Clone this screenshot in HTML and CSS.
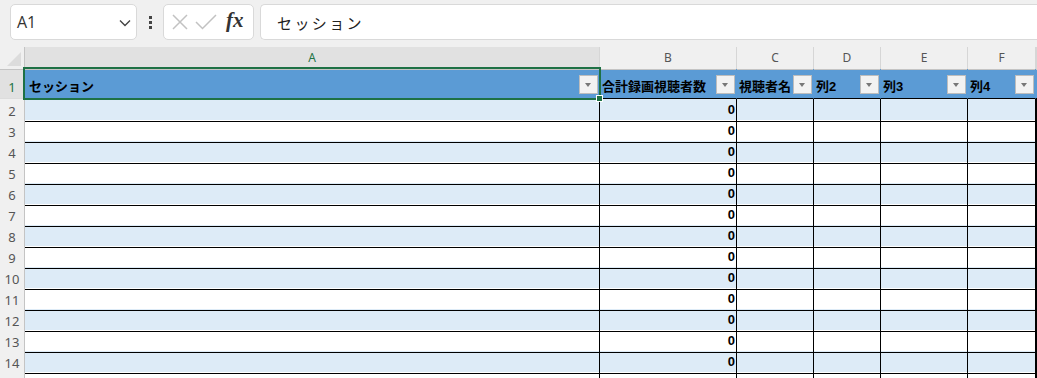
FILE: index.html
```html
<!DOCTYPE html>
<html lang="ja">
<head>
    <meta charset="UTF-8">
    <title>Sheet</title>
    <link rel="stylesheet" href="styles.css">
</head>
<body>

    <!-- Formula bar -->
    <div class="toolbar">
        <div class="namebox">
            <span>A1</span>
            <svg width="12" height="8" viewBox="0 0 12 8"><path d="M1 1.5 L6 6.5 L11 1.5" fill="none" stroke="#444" stroke-width="1.4"/></svg>
        </div>
        <div class="dots"><i></i><i></i><i></i></div>
        <div class="fxbox">
            <svg width="18" height="18" viewBox="0 0 18 18"><path d="M2 2 L16 16 M16 2 L2 16" stroke="#c2c2c2" stroke-width="1.5"/></svg>
            <svg width="22" height="18" viewBox="0 0 22 18"><path d="M1 9 L7.5 15.5 L21 2" fill="none" stroke="#c2c2c2" stroke-width="1.5"/></svg>
            <span class="fx">fx</span>
        </div>
        <div class="formula">セッション</div>
    </div>

    <!-- Grid -->
    <div class="sheet">
        <div class="row colhead">
            <div class="corner"></div>
            <div class="sel">A</div><div>B</div><div>C</div><div>D</div><div>E</div><div>F</div><div></div>
        </div>

        <div class="row thead">
            <div class="rh sel">1</div>
            <div class="hc a1">セッション<b class="dd"></b></div>
            <div class="hc">合計録画視聴者数<b class="dd"></b></div>
            <div class="hc">視聴者名<b class="dd"></b></div>
            <div class="hc">列2<b class="dd"></b></div>
            <div class="hc">列3<b class="dd"></b></div>
            <div class="hc">列4<b class="dd"></b></div>
            <div class="hc"></div>
        </div>

        <div class="row band"><div class="rh">2</div><div></div><div class="num">0</div><div></div><div></div><div></div><div></div><div></div></div>
        <div class="row"><div class="rh">3</div><div></div><div class="num">0</div><div></div><div></div><div></div><div></div><div></div></div>
        <div class="row band"><div class="rh">4</div><div></div><div class="num">0</div><div></div><div></div><div></div><div></div><div></div></div>
        <div class="row"><div class="rh">5</div><div></div><div class="num">0</div><div></div><div></div><div></div><div></div><div></div></div>
        <div class="row band"><div class="rh">6</div><div></div><div class="num">0</div><div></div><div></div><div></div><div></div><div></div></div>
        <div class="row"><div class="rh">7</div><div></div><div class="num">0</div><div></div><div></div><div></div><div></div><div></div></div>
        <div class="row band"><div class="rh">8</div><div></div><div class="num">0</div><div></div><div></div><div></div><div></div><div></div></div>
        <div class="row"><div class="rh">9</div><div></div><div class="num">0</div><div></div><div></div><div></div><div></div><div></div></div>
        <div class="row band"><div class="rh">10</div><div></div><div class="num">0</div><div></div><div></div><div></div><div></div><div></div></div>
        <div class="row"><div class="rh">11</div><div></div><div class="num">0</div><div></div><div></div><div></div><div></div><div></div></div>
        <div class="row band"><div class="rh">12</div><div></div><div class="num">0</div><div></div><div></div><div></div><div></div><div></div></div>
        <div class="row"><div class="rh">13</div><div></div><div class="num">0</div><div></div><div></div><div></div><div></div><div></div></div>
        <div class="row band"><div class="rh">14</div><div></div><div class="num">0</div><div></div><div></div><div></div><div></div><div></div></div>
        <div class="row"><div class="rh">15</div><div></div><div class="num">0</div><div></div><div></div><div></div><div></div><div></div></div>
    </div>

</body>
</html>
```

FILE: styles.css
```css
body {
    margin: 0;
    background: #f0f0f0;
    font-family: "Liberation Sans", "Noto Sans CJK JP", sans-serif;
    width: 1037px;
    height: 378px;
    overflow: hidden;
}
.toolbar {
    display: flex;
    align-items: center;
    height: 36px;
    padding: 4px 0 7px 10px;
}
.namebox {
    box-sizing: border-box;
    width: 127px;
    height: 36px;
    background: white;
    border: 1px solid #d9d9d9;
    border-radius: 5px;
    display: flex;
    align-items: center;
    justify-content: space-between;
    padding: 0 5px 0 6px;
    font-family: "Open Sans", sans-serif;
    font-size: 16px;
    color: #333;
}
.namebox svg {
    margin-top: 2px;
}
.dots {
    width: 26px;
    display: flex;
    flex-direction: column;
    align-items: center;
    gap: 2px;
}
.dots i {
    width: 3px;
    height: 3px;
    background: #444;
}
.fxbox {
    box-sizing: border-box;
    width: 91px;
    height: 36px;
    background: white;
    border: 1px solid #d9d9d9;
    border-radius: 5px;
    display: flex;
    align-items: center;
    padding-left: 7px;
    gap: 6px;
}
.fx {
    font-family: "Liberation Serif", serif;
    font-style: italic;
    font-weight: bold;
    font-size: 21px;
    color: #333;
    margin-left: 3px;
    margin-top: -3px;
}
.formula {
    box-sizing: border-box;
    flex: 1;
    height: 36px;
    margin-left: 6px;
    background: white;
    border: 1px solid #d9d9d9;
    border-right: none;
    border-radius: 5px 0 0 5px;
    display: flex;
    align-items: center;
    padding-left: 16px;
    font-family: "Noto Sans CJK JP", sans-serif;
    font-weight: 400;
    font-size: 15px;
    letter-spacing: 2.4px;
    color: #222;
}

/* sheet grid */
.row {
    display: grid;
    grid-template-columns: 25px 575px 137px 77px 67px 87px 68px 1fr;
    height: 21px;
    background: white;
}
.row > div {
    box-sizing: border-box;
    border-right: 1px solid #000;
    border-bottom: 1px solid #000;
}
.row.band {
    background: #ddebf7;
}
.row .rh {
    display: flex;
    align-items: flex-end;
    justify-content: center;
    padding-bottom: 1px;
    background: #f0f0f0;
    border-right: 1px solid #c4c4c4;
    border-bottom: 1px solid #dcdcdc;
    font-family: "Noto Sans", sans-serif;
    font-size: 13px;
    line-height: 18px;
    color: #555;
}
.row .rh.sel {
    background: #e1e1e1;
    color: #217346;
    padding-bottom: 2px;
}
.row .num {
    text-align: right;
    padding-right: 1px;
    font-weight: bold;
    font-size: 13px;
    line-height: 22px;
    color: #000;
}

.colhead {
    height: 22px;
    background: #f0f0f0;
}
.colhead > div {
    border-right: 1px solid #d6d6d6;
    border-bottom: 1px solid #c4c4c4;
    text-align: center;
    font-family: "Noto Sans", sans-serif;
    font-size: 12px;
    line-height: 22px;
    color: #555;
}
.colhead .sel {
    background: #e1e1e1;
    color: #217346;
}
.colhead .corner {
    position: relative;
    border-right: 1px solid #c4c4c4;
}
.colhead .corner::after {
    content: "";
    position: absolute;
    right: 3px;
    bottom: 3px;
    border-left: 14px solid transparent;
    border-bottom: 14px solid #dcdcdc;
}

.thead {
    height: 30px;
    background: #5b9bd5;
}
.thead .hc {
    display: flex;
    align-items: flex-end;
    justify-content: space-between;
    border-right-color: #5b9bd5;
    padding: 0 1px 3px 2px;
    font-weight: bold;
    font-size: 13px;
    line-height: 16px;
    color: #000;
    white-space: nowrap;
}
.thead .a1 {
    position: relative;
    padding-left: 4px;
}
.thead .a1::before {
    content: "";
    position: absolute;
    left: -2px;
    top: -2px;
    right: -2px;
    bottom: -2px;
    border: 2px solid #1e7145;
    pointer-events: none;
}
.thead .a1::after {
    content: "";
    position: absolute;
    right: -4px;
    bottom: -4px;
    width: 5px;
    height: 5px;
    background: #1e7145;
    border: 1px solid white;
    z-index: 1;
}
.dd {
    position: relative;
    flex: none;
    box-sizing: border-box;
    width: 19px;
    height: 19px;
    margin-bottom: 1px;
    background: #f2f2f2;
    border: 1px solid #bdbdbd;
}
.dd::after {
    content: "";
    position: absolute;
    left: 5px;
    top: 7px;
    border-left: 3.5px solid transparent;
    border-right: 3.5px solid transparent;
    border-top: 4px solid #777;
}
```
